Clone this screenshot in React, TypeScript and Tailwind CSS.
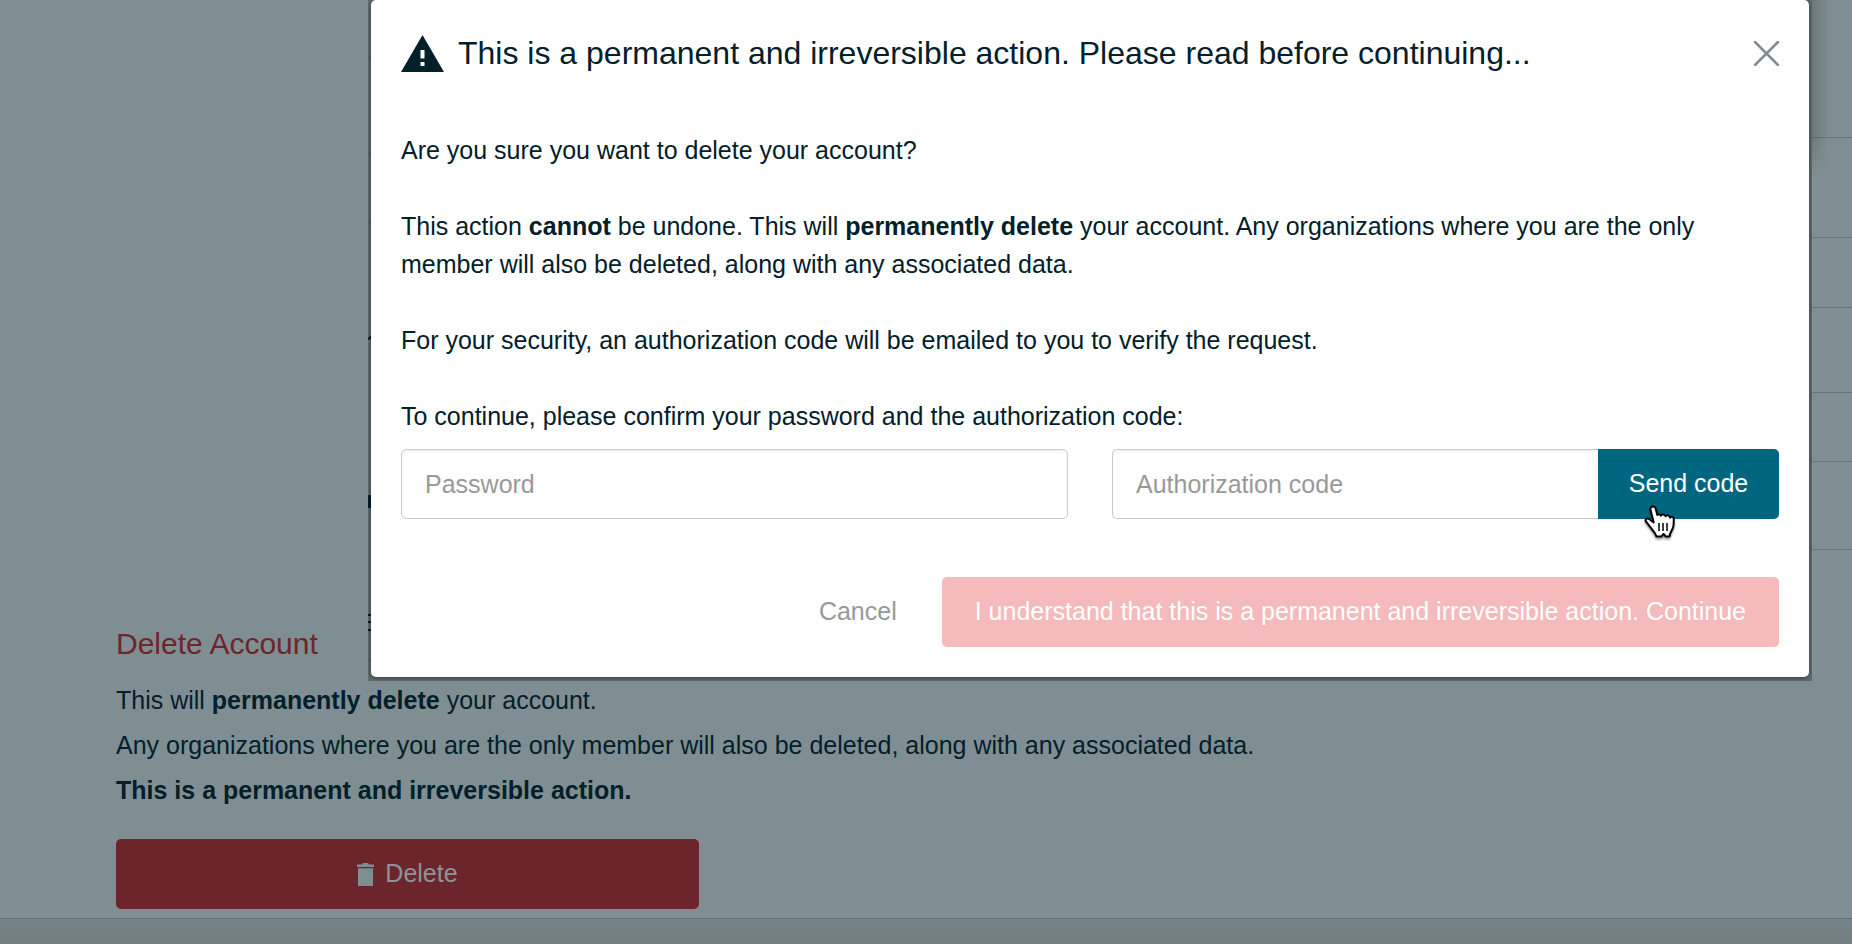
import React from "react";

const rows = ["h-[138px]", "h-[100px]", "h-[70px]", "h-[85px]", "h-[69px]", "h-[88px]"];

function SettingsPage() {
  return (
    <main className="flex min-h-screen flex-col">
      <div className="flex w-1/5 flex-col self-end">
        {rows.map((h) => (
          <div key={h} className={`${h} border-b border-[#67767a]`} />
        ))}
      </div>
      <section className="flex flex-col px-[116px] pt-[74px]">
        <h2 className="text-[30px] leading-[40px] text-[#6e262c]">Delete Account</h2>
        <div className="flex flex-col gap-[7px] pt-[17px] text-[25px] leading-[38px]">
          <p>
            This will <strong>permanently delete</strong> your account.
          </p>
          <p>Any organizations where you are the only member will also be deleted, along with any associated data.</p>
          <p>
            <strong>This is a permanent and irreversible action.</strong>
          </p>
        </div>
        <button
          type="button"
          className="mt-[30px] flex h-[70px] w-[583px] items-center justify-center gap-[11px] rounded-[5px] bg-[#6c262b] text-[25px] text-[#8b9497]"
        >
          <svg className="h-[23px] w-[17px]" viewBox="0 0 17 23" fill="#7f8e92" aria-hidden="true">
            <path d="M0 1.5h4.8L6 0h5l1.2 1.5H17V4H0zM1 5.3h15V23H1z" />
          </svg>
          Delete
        </button>
      </section>
      <footer className="mt-[9px] flex-1 border-t border-[#647478] bg-linear-to-b from-[#768488] to-[#717f7e]" />
    </main>
  );
}

function EdgeMarks() {
  return (
    <svg className="absolute top-0 left-0 h-[682px] w-[3px]" viewBox="0 0 3 682" aria-hidden="true">
      <path d="M0 57h3v1H0zM0 153h3v1H0zM0 222h3v1H0zM0 659h3v1H0z" fill="#4b585c" />
      <path d="M0 338l2-2h1v3L0 340zM0 495h3v13H0zM0 614h3v2H0zM0 621h3v2H0zM0 629h3v2H0z" fill="#02202a" />
    </svg>
  );
}

function HandCursor() {
  return (
    <svg
      className="pointer-events-none absolute top-[56px] left-[46px] h-[34px] w-[31px] drop-shadow-[0_2px_1px_rgba(0,0,0,0.4)]"
      viewBox="0 0 31 34"
      aria-hidden="true"
    >
      <path
        d="M9.3 1.5c-2-.3-3.2 1.300-2.800 3.200l3.200 12.800-4.200-3.300c-2.500-1.600-4.800.300-3.600 2.200l6.200 8.100c1.800 2.200 3.500 3.700 4.300 7h5l2.200-2.500 2.200 2.500h3.700c.2-3.500 2.500-5.500 3.700-9.500.6-2.500.6-5 .5-8.300-.2-2.200-2.600-2.600-3.600-1-.6-2.600-3.400-3.200-4.500-1.400-.9-2.200-3.900-2.400-4.900-.6-.7-1.500-2.200-1.800-3.400-.8L11.700 3.500c-.3-1.200-1.200-1.900-2.400-2z"
        fill="#fff"
        stroke="#000"
        strokeWidth="2"
        strokeLinejoin="round"
      />
      <path d="M15 18v8M19 18v8M23 18v8" stroke="#000" strokeWidth="1.500" />
    </svg>
  );
}

function DeleteDialog() {
  return (
    <div className="absolute inset-x-0 top-0 flex pr-[40px] pl-[368px]">
      <div className="relative flex-1 overflow-hidden bg-[#606d70] px-[3px] pb-[4px]">
        <EdgeMarks />
        <div
          role="dialog"
          aria-labelledby="dialog-title"
          className="relative rounded-[5px] bg-white px-[30px] pb-[30px] shadow-[0_1px_5px_rgba(0,0,0,0.5)]"
        >
          <header className="flex h-[106px] items-center gap-[14px]">
            <svg className="h-[37px] w-[43px]" viewBox="0 0 43 37" fill="#02202a" aria-hidden="true">
              <path fillRule="evenodd" d="M21.500 0L43 37H0zM19.500 15v8.500h4V15zM19.500 27v4h4v-4z" />
            </svg>
            <h1 id="dialog-title" className="flex-1 text-[32px] leading-[40px]">
              This is a permanent and irreversible action. Please read before continuing...
            </h1>
            <button type="button" aria-label="Close" className="flex size-[25px] items-center justify-center">
              <svg className="size-[25px]" viewBox="0 0 25 25" aria-hidden="true">
                <path d="M1 1l23 23M24 1L1 24" stroke="#7f8e92" strokeWidth="2.500" strokeLinecap="round" />
              </svg>
            </button>
          </header>
          <div className="flex flex-col gap-[38px] pt-[25px] text-[25px] leading-[38px]">
            <p>Are you sure you want to delete your account?</p>
            <p>
              This action <strong>cannot</strong> be undone. This will <strong>permanently delete</strong> your account.
              Any organizations where you are the only member will also be deleted, along with any associated data.
            </p>
            <p>For your security, an authorization code will be emailed to you to verify the request.</p>
            <p>To continue, please confirm your password and the authorization code:</p>
          </div>
          <form className="text-[25px]" onSubmit={(e) => e.preventDefault()}>
            <div className="grid grid-cols-2 gap-[44px] pt-[14px]">
              <input
                type="password"
                aria-label="Password"
                placeholder="Password"
                className="h-[70px] min-w-0 rounded-[5px] border border-[#cccccc] px-[23px] shadow-[inset_0_2px_3px_rgba(0,0,0,0.06)] placeholder:text-[#999999]"
              />
              <div className="flex">
                <input
                  type="text"
                  aria-label="Authorization code"
                  placeholder="Authorization code"
                  className="h-[70px] min-w-0 flex-1 rounded-l-[5px] border border-r-0 border-[#cccccc] px-[23px] shadow-[inset_0_2px_3px_rgba(0,0,0,0.06)] placeholder:text-[#999999]"
                />
                <div className="relative">
                  <button type="button" className="h-[70px] w-[181px] rounded-r-[5px] bg-[#006680] text-white">
                    Send code
                  </button>
                  <HandCursor />
                </div>
              </div>
            </div>
            <div className="flex justify-end gap-[14px] pt-[58px]">
              <button type="button" className="h-[70px] px-[31px] text-[#999999]">
                Cancel
              </button>
              <button type="submit" className="h-[70px] rounded-[5px] bg-[#f4babc] px-[33px] text-white">
                I understand that this is a permanent and irreversible action. Continue
              </button>
            </div>
          </form>
        </div>
      </div>
      <div className="h-[172px] w-0">
        <div className="h-full w-[16px] bg-linear-to-r from-black/15 to-transparent mask-b-from-80%" />
      </div>
    </div>
  );
}

export default function App() {
  return (
    <div className="relative min-h-screen overflow-hidden bg-[#7f8e92] font-['Liberation_Sans',Arial,sans-serif] text-[#02202a]">
      <SettingsPage />
      <DeleteDialog />
    </div>
  );
}
